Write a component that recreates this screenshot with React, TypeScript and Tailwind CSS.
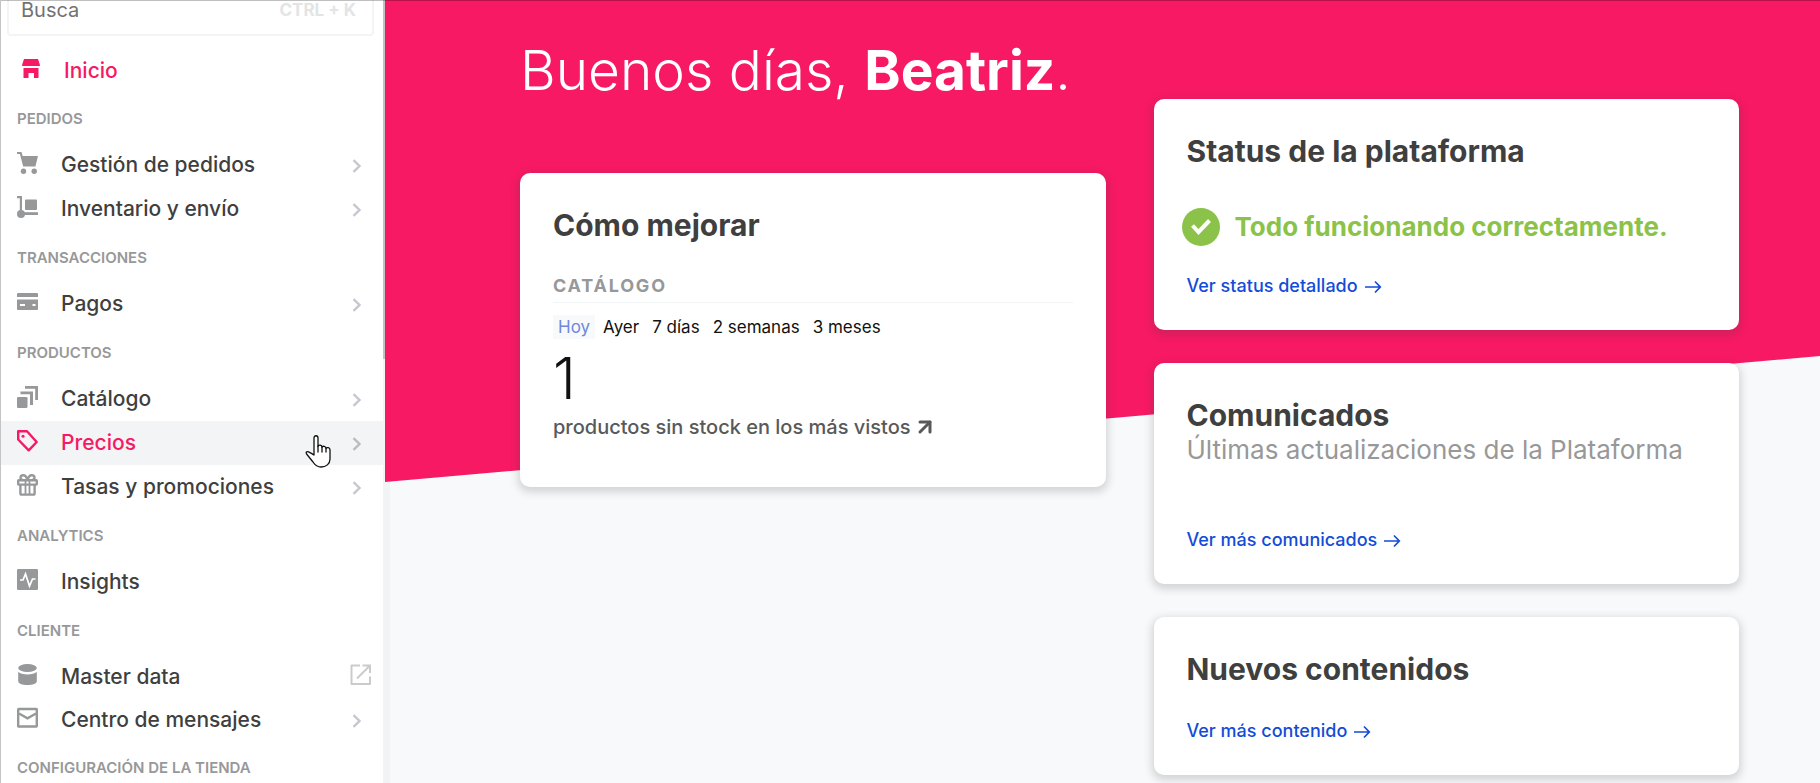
import type { ReactNode } from "react";
import { ArrowUpRight } from "lucide-react";

function StoreIcon() {
  return (
    <svg width="20" height="20" viewBox="0 0 20 20" fill="currentColor" aria-hidden="true">
      <path d="M2 0h14l1.500 4.500.500 2.500H0l.5-2.500z" />
      <path d="M1.500 9h15v10h-4.500v-5H6.500v5H1.500z" />
    </svg>
  );
}

function CartIcon() {
  return (
    <svg width="22" height="22" viewBox="0 0 22 22" fill="currentColor" aria-hidden="true">
      <path d="M0 0h4.500l1.200 4H21l-2.600 10.500H6.200L2.900 2H0z" />
      <circle cx="6.500" cy="19.200" r="2.700" />
      <circle cx="17.200" cy="19.200" r="2.700" />
    </svg>
  );
}

function DollyIcon() {
  return (
    <svg width="22" height="22" viewBox="0 0 22 22" fill="currentColor" aria-hidden="true">
      <path d="M0 0h5v15H2.800V2.200H0z" />
      <circle cx="4" cy="18" r="4" />
      <path d="M5 16.200h16v2.800H5z" />
      <rect x="8" y="3.600" width="12" height="10.400" rx="1" />
    </svg>
  );
}

function CardIcon() {
  return (
    <svg width="22" height="22" viewBox="0 0 22 22" fill="currentColor" aria-hidden="true">
      <path d="M1 2h19a1 1 0 0 1 1 1v3H0V3a1 1 0 0 1 1-1z" />
      <path
        fillRule="evenodd"
        d="M0 8.500h21V18a1 1 0 0 1-1 1H1a1 1 0 0 1-1-1zM3 13v2h5v-2zM15.500 13v2h3v-2z"
      />
    </svg>
  );
}

function StackIcon() {
  return (
    <svg width="22" height="22" viewBox="0 0 22 22" fill="currentColor" aria-hidden="true">
      <rect x="0" y="11" width="10.500" height="11" rx="1.200" />
      <path d="M3.500 5.500h12.500V19h-3V8.300H3.500z" />
      <path d="M8 0h13v14h-2.800V2.800H8z" />
    </svg>
  );
}

function TagIcon() {
  return (
    <svg width="22" height="22" viewBox="0 0 22 22" fill="none" stroke="currentColor" strokeWidth="2.400" aria-hidden="true">
      <path d="M1.200 1.200H10L19.700 12l-8 8.300L1.200 9.500z" strokeLinejoin="round" />
      <circle cx="6" cy="6.300" r="1.500" fill="currentColor" stroke="none" />
    </svg>
  );
}

function GiftIcon() {
  return (
    <svg width="22" height="22" viewBox="0 0 22 22" fill="none" stroke="currentColor" strokeWidth="2.400" aria-hidden="true">
      <path d="M10.500 6C9.500 2.200 8 1.200 6.300 1.200 4.500 1.200 3.500 2.300 3.500 3.500 3.500 5 4.500 6 6 6M10.500 6c1-3.800 2.500-4.800 4.200-4.800 1.800 0 2.800 1.100 2.800 2.300C17.500 5 16.500 6 15 6" />
      <rect x="1.200" y="6.300" width="18.600" height="4.300" rx=".5" />
      <path d="M3.400 11v8.200c0 .8.400 1.400 1.400 1.400h11.400c1 0 1.400-.6 1.400-1.400V11" />
      <path d="M8.500 7v14M12.500 7v14" strokeWidth="1.800" />
    </svg>
  );
}

function PulseIcon() {
  return (
    <svg width="22" height="22" viewBox="0 0 22 22" aria-hidden="true">
      <rect width="21" height="21" rx="1.200" fill="currentColor" />
      <path d="M3 11h3l2.500-6 4 12 3-7H18.500" fill="none" stroke="#fff" strokeWidth="1.700" />
    </svg>
  );
}

function DatabaseIcon() {
  return (
    <svg width="22" height="22" viewBox="0 0 22 22" fill="currentColor" aria-hidden="true">
      <ellipse cx="10.500" cy="4" rx="9.300" ry="4" />
      <path d="M1.200 7.800c2 2 5 2.600 9.300 2.600s7.300-.6 9.300-2.600V17c0 2.600-4 4-9.300 4s-9.300-1.400-9.300-4z" />
    </svg>
  );
}

function MailIcon() {
  return (
    <svg width="22" height="22" viewBox="0 0 22 22" fill="none" stroke="currentColor" strokeWidth="2.400" aria-hidden="true">
      <rect x="1.200" y="2" width="18.600" height="17.500" rx=".5" />
      <path d="M2 6.500l8.500 4.800L19 6.500" />
    </svg>
  );
}

function Chevron() {
  return (
    <svg width="10" height="14" viewBox="0 0 10 14" fill="none" stroke="currentColor" strokeWidth="2.400" aria-hidden="true">
      <path d="M1.500 1.200L7.500 7l-6 5.800" />
    </svg>
  );
}

function ExternalIcon() {
  return (
    <svg width="22" height="22" viewBox="0 0 22 22" fill="none" stroke="currentColor" strokeWidth="2" aria-hidden="true">
      <path d="M10 1.500H1.500v18.500h18.500v-7.500" strokeLinejoin="round" />
      <path d="M12.500 1.500H20V9M20 1.500L7 14.500" />
    </svg>
  );
}

function LongArrow() {
  return (
    <svg width="18" height="16" viewBox="0 0 18 16" fill="none" stroke="currentColor" strokeWidth="1.700" aria-hidden="true">
      <path d="M1 9h15M11 3.500L16.300 9 11 14.500" />
    </svg>
  );
}

function HandPointer() {
  return (
    <svg width="26" height="33" viewBox="0 0 26 33" fill="#fff" stroke="#111" strokeWidth="1.300" strokeLinejoin="round" strokeLinecap="round" aria-hidden="true">
      <path d="M9 20V3c0-3 4-3 4 0v8.500c.5-2 4-1.800 4 .8.600-1.700 4-1.300 4 1 .8-1.300 4-.9 4 1.600V24c0 5-4 8-9 8-4 0-6-2-8-5l-6-7.500C.300 17.500 1.500 16 3.500 16.800c1.500.6 3.500 2 5.500 3.200z" />
      <path d="M13 11v6M17 12.500V17M21 13.500V17" fill="none" />
    </svg>
  );
}

type Item = {
  label: string;
  icon: ReactNode;
  trail?: "chevron" | "external";
  active?: boolean;
};

const sections: { title: string; compact?: boolean; items: Item[] }[] = [
  {
    title: "PEDIDOS",
    items: [
      { label: "Gestión de pedidos", icon: <CartIcon />, trail: "chevron" },
      { label: "Inventario y envío", icon: <DollyIcon />, trail: "chevron" },
    ],
  },
  { title: "TRANSACCIONES", items: [{ label: "Pagos", icon: <CardIcon />, trail: "chevron" }] },
  {
    title: "PRODUCTOS",
    items: [
      { label: "Catálogo", icon: <StackIcon />, trail: "chevron" },
      { label: "Precios", icon: <TagIcon />, trail: "chevron", active: true },
      { label: "Tasas y promociones", icon: <GiftIcon />, trail: "chevron" },
    ],
  },
  { title: "ANALYTICS", items: [{ label: "Insights", icon: <PulseIcon /> }] },
  {
    title: "CLIENTE",
    compact: true,
    items: [
      { label: "Master data", icon: <DatabaseIcon />, trail: "external" },
      { label: "Centro de mensajes", icon: <MailIcon />, trail: "chevron" },
    ],
  },
  { title: "CONFIGURACIÓN DE LA TIENDA", items: [] },
];

function NavItem({ item, compact }: { item: Item; compact?: boolean }) {
  return (
    <li className="relative">
      <a
        href="#"
        className={`flex items-center pl-4 pr-[13px] text-[21px] font-medium ${compact ? "h-[43px]" : "h-11"} ${
          item.active ? "bg-[#f2f4f5] text-[#f71963]" : "text-[#3f3f40]"
        }`}
      >
        <span className={`mb-1 w-11 shrink-0 ${item.active ? "" : "text-[#979899]"}`}>{item.icon}</span>
        <span className="flex-1 whitespace-nowrap">{item.label}</span>
        {item.trail === "chevron" && (
          <span className={`mt-0.5 mr-2.5 ${item.active ? "text-[#bcbcbc]" : "text-[#c7c7d1]"}`}>
            <Chevron />
          </span>
        )}
        {item.trail === "external" && (
          <span className="mb-1 text-[#cacbcc]">
            <ExternalIcon />
          </span>
        )}
      </a>
      {item.active && (
        <span className="pointer-events-none absolute right-[54px] top-3.5">
          <HandPointer />
        </span>
      )}
    </li>
  );
}

function Card({ title, className, children }: { title: string; className?: string; children: ReactNode }) {
  return (
    <section className={`rounded-[10px] bg-white px-[33px] pt-[33px] shadow-[0_3px_9px_2px_rgba(61,62,64,0.2)] ${className ?? ""}`}>
      <h2 className="text-[30px] font-bold leading-[38px] text-[#3f3f40]">{title}</h2>
      {children}
    </section>
  );
}

function MoreLink({ children }: { children: ReactNode }) {
  return (
    <a href="#" className="flex items-center gap-1.5 text-[18px] font-medium leading-6 text-[#134cd8]">
      {children}
      <LongArrow />
    </a>
  );
}

const ranges = ["Hoy", "Ayer", "7 días", "2 semanas", "3 meses"];

export default function App() {
  return (
    <div className="relative flex h-screen overflow-hidden border-l border-[#c4c4c4] bg-[#f7f9fa] font-['Inter',sans-serif]">
      <aside className="relative w-[384px] shrink-0 overflow-hidden bg-white">
        <label className="-mt-4 ml-1.5 mr-[11px] flex h-[52px] items-center rounded border-2 border-[#f2f4f5] px-3">
          <input
            type="text"
            aria-label="Busca"
            placeholder="Busca"
            className="min-w-0 flex-1 text-[20px] leading-6 outline-none placeholder:text-[#727273]"
          />
          <kbd className="pr-1 font-['Inter',sans-serif] text-[17px] font-bold leading-5 text-[#e3e4e6]">CTRL + K</kbd>
        </label>
        <nav className="pt-[13px]">
          <a href="#" className="flex h-[43px] items-center pl-[21px] text-[21px] font-medium text-[#f71963]">
            <span className="mb-1 w-[42px]">
              <StoreIcon />
            </span>
            Inicio
          </a>
          {sections.map((s) => (
            <div key={s.title}>
              <h3 className="flex h-[51px] items-center whitespace-nowrap pl-4 pt-1 text-[15px] font-semibold text-[#979899]">
                {s.title}
              </h3>
              <ul>
                {s.items.map((i) => (
                  <NavItem key={i.label} item={i} compact={s.compact} />
                ))}
              </ul>
            </div>
          ))}
        </nav>
        <span className="absolute right-0 top-0 h-full w-0.5 bg-[#f2f4f5]" />
        <span className="absolute right-0 top-0 h-[359px] w-0.5 bg-[#c2c2c2]" />
      </aside>

      <main className="relative min-w-0 flex-1">
        <div className="absolute inset-y-0 left-0 w-[5px] bg-[#f1f3f5]" />
        <div className="absolute inset-0 bg-[#f71963] [clip-path:polygon(0_0,100%_0,100%_356px,0_482px)]" />
        <div className="relative grid grid-cols-2 items-start gap-12 pl-[135px] pr-[81px]">
          <div>
            <h1 className="whitespace-nowrap pt-[34px] text-[55px] font-light leading-[72px] text-white">
              Buenos días, <strong className="font-bold">Beatriz</strong>.
            </h1>
            <Card title="Cómo mejorar" className="mt-[67px] pb-[46px]">
              <h3 className="mt-[30px] border-b border-[#f2f4f5] pb-1 text-[18px] font-bold leading-6 tracking-widest text-[#979899]">
                CATÁLOGO
              </h3>
              <div className="mt-3 flex gap-[3px] text-[17px] leading-6">
                {ranges.map((r, i) => (
                  <button
                    key={r}
                    type="button"
                    className={`whitespace-nowrap px-[5px] ${i === 0 ? "bg-[#f7f9fa] text-[#6f88dd]" : "text-[#111]"}`}
                  >
                    {r}
                  </button>
                ))}
              </div>
              <p className="mt-1 text-[58px] font-light leading-[70px] text-[#111]">1</p>
              <a href="#" className="flex items-center gap-0.5 whitespace-nowrap text-[20px] font-medium leading-7 text-[#585959]">
                productos sin stock en los más vistos
                <ArrowUpRight size={24} strokeWidth={3} />
              </a>
            </Card>
          </div>

          <div className="flex flex-col gap-[33px] pt-[99px]">
            <Card title="Status de la plataforma" className="pb-8">
              <div className="-ml-[5px] mt-[38px] flex items-center gap-[15px]">
                <svg width="38" height="38" viewBox="0 0 38 38" aria-hidden="true">
                  <circle cx="19" cy="19" r="19" fill="#8bc34a" />
                  <path d="M10.500 17.500l6 6.500L27.500 12.500" fill="none" stroke="#fff" strokeWidth="4" />
                </svg>
                <p className="whitespace-nowrap text-[26px] font-bold leading-8 text-[#8bc34a]">
                  Todo funcionando correctamente.
                </p>
              </div>
              <div className="mt-7">
                <MoreLink>Ver status detallado</MoreLink>
              </div>
            </Card>
            <Card title="Comunicados" className="pb-8">
              <p className="whitespace-nowrap text-[26px] font-normal leading-8 text-[#979899]">
                Últimas actualizaciones de la Plataforma
              </p>
              <div className="mt-[62px]">
                <MoreLink>Ver más comunicados</MoreLink>
              </div>
            </Card>
            <Card title="Nuevos contenidos" className="pb-8">
              <div className="mt-[31px]">
                <MoreLink>Ver más contenido</MoreLink>
              </div>
            </Card>
          </div>
        </div>
      </main>
      <span className="absolute inset-x-0 top-0 h-px bg-black/25" />
    </div>
  );
}
